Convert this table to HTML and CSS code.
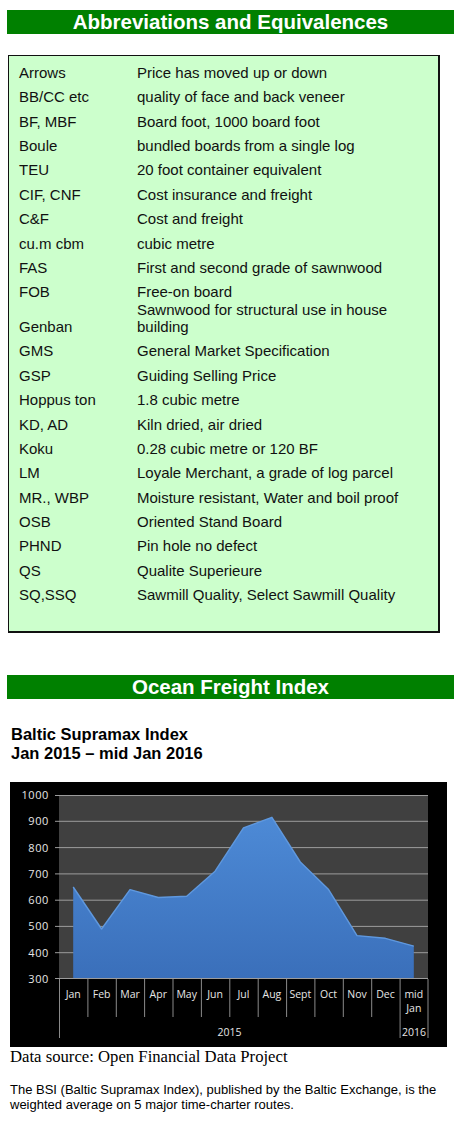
FILE: index.html
```html
<!DOCTYPE html>
<html>
<head>
<meta charset="utf-8">
<link rel="stylesheet" href="styles.css">
</head>
<body>
<div class="page">
  <div class="bar">Abbreviations and Equivalences</div>
  <div class="abbr">
    <div class="row"><span>Arrows</span><span>Price has moved up or down</span></div>
    <div class="row"><span>BB/CC etc</span><span>quality of face and back veneer</span></div>
    <div class="row"><span>BF, MBF</span><span>Board foot, 1000 board foot</span></div>
    <div class="row"><span>Boule</span><span>bundled boards from a single log</span></div>
    <div class="row"><span>TEU</span><span>20 foot container equivalent</span></div>
    <div class="row"><span>CIF, CNF</span><span>Cost insurance and freight</span></div>
    <div class="row"><span>C&amp;F</span><span>Cost and freight</span></div>
    <div class="row"><span>cu.m cbm</span><span>cubic metre</span></div>
    <div class="row"><span>FAS</span><span>First and second grade of sawnwood</span></div>
    <div class="row"><span>FOB</span><span>Free-on board</span></div>
    <div class="row tall"><span>Genban</span><span>Sawnwood for structural use in house<br>building</span></div>
    <div class="row"><span>GMS</span><span>General Market Specification</span></div>
    <div class="row"><span>GSP</span><span>Guiding Selling Price</span></div>
    <div class="row"><span>Hoppus ton</span><span>1.8 cubic metre</span></div>
    <div class="row"><span>KD, AD</span><span>Kiln dried, air dried</span></div>
    <div class="row"><span>Koku</span><span>0.28 cubic metre or 120 BF</span></div>
    <div class="row"><span>LM</span><span>Loyale Merchant, a grade of log parcel</span></div>
    <div class="row"><span>MR., WBP</span><span>Moisture resistant, Water and boil proof</span></div>
    <div class="row"><span>OSB</span><span>Oriented Stand Board</span></div>
    <div class="row"><span>PHND</span><span>Pin hole no defect</span></div>
    <div class="row"><span>QS</span><span>Qualite Superieure</span></div>
    <div class="row"><span>SQ,SSQ</span><span>Sawmill Quality, Select Sawmill Quality</span></div>
  </div>

  <div class="bar bar-ocean">Ocean Freight Index</div>
  <h2 class="chart-title">Baltic Supramax Index<br>Jan 2015 – mid Jan 2016</h2>

  <div class="chart">
    <svg width="437" height="265" viewBox="0 0 437 265">
      <defs>
        <linearGradient id="area" x1="0" y1="0" x2="0" y2="1">
          <stop offset="0" stop-color="#4d8ad6"/>
          <stop offset="1" stop-color="#3a6fba"/>
        </linearGradient>
      </defs>
      <rect x="0" y="0" width="437" height="265" fill="#000"/>
      <rect x="49" y="13" width="369" height="184" fill="#404040"/>
      <g class="grid">
        <line x1="45" y1="13.5" x2="418" y2="13.5"/>
        <line x1="45" y1="39.3" x2="418" y2="39.3"/>
        <line x1="45" y1="65.6" x2="418" y2="65.6"/>
        <line x1="45" y1="91.9" x2="418" y2="91.9"/>
        <line x1="45" y1="118.2" x2="418" y2="118.2"/>
        <line x1="45" y1="144.4" x2="418" y2="144.4"/>
        <line x1="45" y1="170.7" x2="418" y2="170.7"/>
      </g>
      <path d="M63.2,197 L63.2,105 L91.6,147 L120,107.6 L148.3,115.5 L176.7,114.2 L205.1,89.2 L233.5,45.8 L261.9,35.3 L290.3,80 L318.6,107.6 L347,153.6 L375.4,156.3 L403.8,164.1 L403.8,197 Z" fill="url(#area)"/>
      <path d="M63.2,105 L91.6,147 L120,107.6 L148.3,115.5 L176.7,114.2 L205.1,89.2 L233.5,45.8 L261.9,35.3 L290.3,80 L318.6,107.6 L347,153.6 L375.4,156.3 L403.8,164.1" fill="none" stroke="#5f98de" stroke-width="1.4" stroke-linejoin="round"/>
      <g class="grid">
        <line x1="45" y1="196.5" x2="418" y2="196.5"/>
      </g>
      <g class="ticks">
        <line x1="49.5" y1="197" x2="49.5" y2="256"/>
        <line x1="77.9" y1="197" x2="77.9" y2="235"/>
        <line x1="106.3" y1="197" x2="106.3" y2="235"/>
        <line x1="134.6" y1="197" x2="134.6" y2="235"/>
        <line x1="163" y1="197" x2="163" y2="235"/>
        <line x1="191.4" y1="197" x2="191.4" y2="235"/>
        <line x1="219.8" y1="197" x2="219.8" y2="235"/>
        <line x1="248.2" y1="197" x2="248.2" y2="235"/>
        <line x1="276.6" y1="197" x2="276.6" y2="235"/>
        <line x1="304.9" y1="197" x2="304.9" y2="235"/>
        <line x1="333.3" y1="197" x2="333.3" y2="235"/>
        <line x1="361.7" y1="197" x2="361.7" y2="235"/>
        <line x1="390.1" y1="197" x2="390.1" y2="256"/>
        <line x1="418" y1="197" x2="418" y2="256"/>
      </g>
      <g class="ylab">
        <text x="39" y="17">1000</text>
        <text x="39" y="43.3">900</text>
        <text x="39" y="69.6">800</text>
        <text x="39" y="95.9">700</text>
        <text x="39" y="122.2">600</text>
        <text x="39" y="148.4">500</text>
        <text x="39" y="174.7">400</text>
        <text x="39" y="201">300</text>
      </g>
      <g class="xlab">
        <text x="63.2" y="216">Jan</text>
        <text x="91.6" y="216">Feb</text>
        <text x="120" y="216">Mar</text>
        <text x="148.3" y="216">Apr</text>
        <text x="176.7" y="216">May</text>
        <text x="205.1" y="216">Jun</text>
        <text x="233.5" y="216">Jul</text>
        <text x="261.9" y="216">Aug</text>
        <text x="290.3" y="216">Sept</text>
        <text x="318.6" y="216">Oct</text>
        <text x="347" y="216">Nov</text>
        <text x="375.4" y="216">Dec</text>
        <text x="403.8" y="216">mid</text>
        <text x="403.8" y="230">Jan</text>
        <text x="219.5" y="254">2015</text>
        <text x="404" y="254">2016</text>
      </g>
    </svg>
  </div>
  <p class="source">Data source: Open Financial Data Project</p>
  <p class="note">The BSI (Baltic Supramax Index), published by the Baltic Exchange, is the weighted average on 5 major time-charter routes.</p>
</div>
</body>
</html>
```

FILE: styles.css
```css
html, body {
  margin: 0;
  padding: 0;
  background: #fff;
}

.page {
  padding-top: 10px;
  font-family: "Liberation Sans", Arial, sans-serif;
  color: #111;
}

.bar {
  margin-left: 7px;
  width: 447px;
  height: 24px;
  line-height: 24px;
  background: #008000;
  color: #fff;
  font-weight: bold;
  font-size: 20.5px;
  text-align: center;
}

.abbr {
  margin: 21px 0 0 8px;
  width: 432px;
  box-sizing: border-box;
  border: 1px solid #111;
  border-right-width: 2px;
  border-bottom-width: 2px;
  background: #ccffcc;
  padding: 4.3px 10px 24.5px;
}

.row {
  display: grid;
  grid-template-columns: 118px 1fr;
  align-items: end;
  font-size: 15px;
  line-height: 17px;
  padding: 3.7px 0;
}

.row.tall {
  margin-top: -3px;
  padding-top: 0;
}

.bar-ocean {
  margin-top: 42px;
}

.chart-title {
  margin: 25.5px 0 0 11px;
  font-size: 16.5px;
  line-height: 19px;
  font-weight: bold;
  color: #000;
}

.chart {
  margin: 19.5px 0 0 10px;
  width: 437px;
  height: 265px;
}

.chart svg {
  display: block;
}

.grid line {
  stroke: #9c9c9c;
  stroke-width: 1;
}

.ticks line {
  stroke: #8a8a8a;
  stroke-width: 1;
}

.ylab text {
  font-family: "Open Sans", sans-serif;
  font-size: 11px;
  fill: #e6e6e6;
  text-anchor: end;
  letter-spacing: 0.6px;
}

.xlab text {
  font-family: "Open Sans", sans-serif;
  font-size: 10.5px;
  fill: #e6e6e6;
  text-anchor: middle;
}

.source {
  margin: 0 0 0 10px;
  font-family: "Liberation Serif", "Times New Roman", serif;
  font-size: 16.7px;
  line-height: 19px;
  color: #000;
}

.note {
  margin: 15.5px 0 0 10px;
  width: 445px;
  font-size: 13px;
  line-height: 15px;
  color: #000;
}
```
